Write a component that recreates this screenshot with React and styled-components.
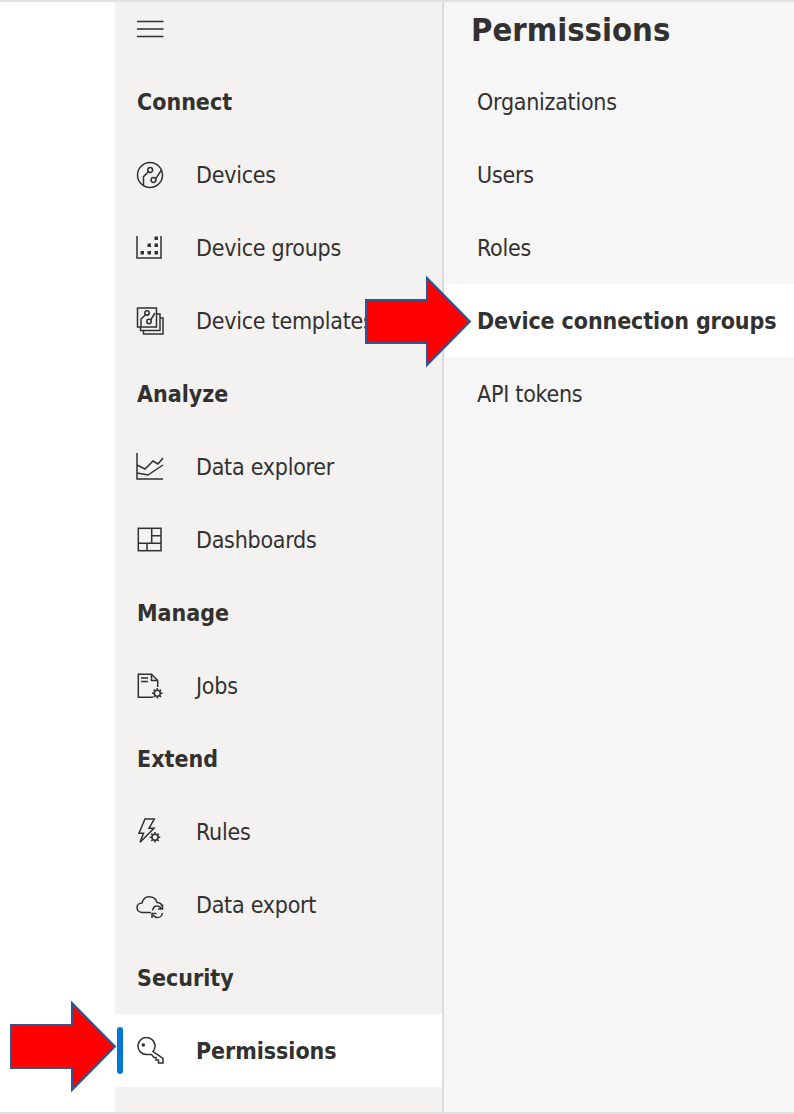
import styled, { createGlobalStyle } from "styled-components";

const GlobalStyle = createGlobalStyle`
  html, body {
    margin: 0;
    padding: 0;
    background: #ffffff;
  }
`;

const Page = styled.div`
  position: relative;
  display: flex;
  width: 794px;
  height: 1114px;
  overflow: hidden;
  box-sizing: border-box;
  padding-left: 115px;
  border-top: 2px solid #e1e1e1;
  border-bottom: 2px solid #e1e1e1;
  font-family: "DejaVu Sans Condensed", "DejaVu Sans", sans-serif;
  font-stretch: condensed;
  color: #323130;
  font-size: 23px;
  letter-spacing: -0.25px;
`;

const Sidebar = styled.nav`
  width: 327px;
  flex: none;
  background: #f3f2f1;
  border-right: 2px solid #dcdcdc;
`;

const MenuRow = styled.div`
  height: 63px;
  padding: 18px 0 0 21.5px;
  box-sizing: border-box;
`;

const MenuIcon = styled.svg`
  display: block;
`;

const Row = styled.div`
  position: relative;
  display: flex;
  align-items: center;
  height: 73px;
  padding-left: 21px;
  box-sizing: border-box;
  background: ${(p) => (p.$active ? "#ffffff" : "transparent")};
  font-weight: ${(p) => (p.$active ? 700 : 400)};
  letter-spacing: ${(p) => (p.$active ? "-0.05px" : "-0.25px")};
  white-space: nowrap;
`;

const SectionRow = styled(Row)`
  padding-left: 22px;
  font-weight: 700;
  letter-spacing: 0;
`;

const IconSlot = styled.span`
  display: block;
  width: 28px;
  height: 28px;
  flex: none;
  margin-right: 32px;
`;

const ActiveBar = styled.span`
  position: absolute;
  left: 2px;
  top: 13px;
  width: 6px;
  height: 47px;
  border-radius: 3px;
  background: #0078d4;
`;

const Panel = styled.main`
  flex: 1;
  background: #f6f6f6;
`;

const PanelTitle = styled.h1`
  margin: 0;
  height: 63px;
  padding: 7px 0 0 27px;
  box-sizing: border-box;
  font-size: 32.5px;
  line-height: 42px;
  font-weight: 700;
  letter-spacing: 0;
`;

const PanelRow = styled.div`
  display: flex;
  align-items: center;
  height: 73px;
  padding-left: 33px;
  background: ${(p) => (p.$active ? "#ffffff" : "transparent")};
  font-weight: ${(p) => (p.$active ? 700 : 400)};
  letter-spacing: ${(p) => (p.$active ? "-0.1px" : "-0.25px")};
  white-space: nowrap;
`;

const Arrow = styled.svg`
  position: absolute;
  left: 0;
  top: -2px;
  pointer-events: none;
`;

const Glyph = ({ children }) => (
  <svg width="28" height="28" viewBox="0 0 28 28" fill="none" stroke="#323130" strokeWidth="1.5">
    {children}
  </svg>
);

const DevicesIcon = () => (
  <Glyph>
    <circle cx="14" cy="14" r="12.5" />
    <circle cx="14.2" cy="9" r="2.4" />
    <circle cx="17.5" cy="19" r="2.4" />
    <path d="M12.6 10.8 7.5 15.6V24M19.6 17.8 25.5 9" />
  </Glyph>
);

const GroupsIcon = () => (
  <Glyph>
    <path d="M1 2V24H25V2" />
    <g fill="#323130" stroke="none">
      <rect x="18.5" y="2.5" width="3.5" height="3.5" />
      <rect x="11.5" y="9.5" width="3.5" height="3.5" />
      <rect x="18.5" y="9.5" width="3.5" height="3.5" />
      <rect x="4.5" y="17" width="3.5" height="3.5" />
      <rect x="11.5" y="17" width="3.5" height="3.5" />
      <rect x="18.5" y="17" width="3.5" height="3.5" />
    </g>
  </Glyph>
);

const TemplatesIcon = () => (
  <Glyph>
    <rect x="1.5" y="1" width="19" height="19" />
    <path d="M4.5 20V23.5H24V7H20.5M7.5 23.5V27H27V11H24" />
    <circle cx="11" cy="6" r="2.2" />
    <circle cx="13" cy="14.5" r="2.2" />
    <path d="M9.6 7.7 5 12V20M14.6 13 19 6" />
  </Glyph>
);

const ExplorerIcon = () => (
  <Glyph>
    <path d="M1 0V26H27" />
    <path d="M1 12 9 16 17 8 22 11 27 5" />
    <path d="M1 20 12 22 27 12" />
  </Glyph>
);

const DashboardIcon = () => (
  <Glyph>
    <rect x="2.3" y="2.3" width="22.7" height="22.4" />
    <path d="M15.7 2.3V17.3M2.3 17.3H25M15.7 9.7H25M11 17.3V24.7" />
  </Glyph>
);

const JobsIcon = () => (
  <Glyph>
    <path d="M17 25.3H2.3V2.3H15.5L21.7 8.5V15" />
    <path d="M15.5 2.3V8.5H21.7" />
    <path d="M5 6H12M5 9.5H12" />
    <circle cx="21.3" cy="21.3" r="3" />
    <path d="M21.3 16V18.3M21.3 24.3V26.6M16 21.3H18.3M24.3 21.3H26.6M17.6 17.6 19.2 19.2M23.4 23.4 25 25M17.6 25 19.2 23.4M23.4 19.2 25 17.6" />
  </Glyph>
);

const RulesIcon = () => (
  <Glyph>
    <path d="M9 1H18.300L13 10.300H18L4 24.300 7.500 15.300H3Z" />
    <circle cx="19" cy="19.3" r="3" />
    <path d="M19 14V16.3M19 22.3V24.6M13.7 19.3H16M22 19.3H24.3M15.3 15.6 16.9 17.2M21.1 21.4 22.7 23M15.3 23 16.9 21.4M21.1 17.2 22.7 15.6" />
  </Glyph>
);

const ExportIcon = () => (
  <Glyph>
    <path d="M15 21.5H6.500C3 21.500 1 19 1 16.500S3 12 6 12C7 8 10 5.700 13 5.700 17 5.700 20 8 21 11.500 23.500 11.500 25.500 13 26 15" />
    <path d="M16.500 19.500C17 16.500 19 15 21 15 23 15 24.500 16 25.500 17.500M26.500 13.500V18H22M26.500 22C26 25 23.500 26.500 21.500 26.500 19.500 26.500 18 25.500 17 24M16 27V22.500H20.500" />
  </Glyph>
);

const KeyIcon = () => (
  <Glyph>
    <path d="M17 14.500A8.500 8.500 0 1 0 11 17.500L15.500 17.500 18 20.500H20V23H22.500V26H27V21.500Z" />
    <circle cx="7.300" cy="8" r="1.800" fill="#323130" stroke="none" />
  </Glyph>
);

const sections = [
  {
    title: "Connect",
    items: [
      { label: "Devices", icon: <DevicesIcon /> },
      { label: "Device groups", icon: <GroupsIcon /> },
      { label: "Device templates", icon: <TemplatesIcon /> },
    ],
  },
  {
    title: "Analyze",
    items: [
      { label: "Data explorer", icon: <ExplorerIcon /> },
      { label: "Dashboards", icon: <DashboardIcon /> },
    ],
  },
  { title: "Manage", items: [{ label: "Jobs", icon: <JobsIcon /> }] },
  {
    title: "Extend",
    items: [
      { label: "Rules", icon: <RulesIcon /> },
      { label: "Data export", icon: <ExportIcon /> },
    ],
  },
  { title: "Security", items: [{ label: "Permissions", icon: <KeyIcon />, active: true }] },
];

const panelItems = ["Organizations", "Users", "Roles", "Device connection groups", "API tokens"];

const BigArrow = ({ d }) => (
  <Arrow width="794" height="1114" viewBox="0 0 794 1114">
    <path d={d} fill="#ff0000" stroke="#2f5597" strokeWidth="2" />
  </Arrow>
);

export default function App() {
  return (
    <>
      <GlobalStyle />
      <Page>
        <Sidebar>
          <MenuRow>
            <MenuIcon width="28" height="18" viewBox="0 0 28 18" fill="none" stroke="#323130" strokeWidth="1.4">
              <path d="M0 1.500H26.500M0 9H26.500M0 16.500H26.500" />
            </MenuIcon>
          </MenuRow>
          {sections.map((section) => (
            <div key={section.title}>
              <SectionRow>{section.title}</SectionRow>
              {section.items.map((item) => (
                <Row key={item.label} $active={item.active}>
                  {item.active && <ActiveBar />}
                  <IconSlot>{item.icon}</IconSlot>
                  {item.label}
                </Row>
              ))}
            </div>
          ))}
        </Sidebar>
        <Panel>
          <PanelTitle>Permissions</PanelTitle>
          {panelItems.map((label) => (
            <PanelRow key={label} $active={label === "Device connection groups"}>
              {label}
            </PanelRow>
          ))}
        </Panel>
        <BigArrow d="M366 300H427V278L470 321.500 427 365V343H366Z" />
        <BigArrow d="M11 1025H72V1003L115 1046.500 72 1090V1068H11Z" />
      </Page>
    </>
  );
}
